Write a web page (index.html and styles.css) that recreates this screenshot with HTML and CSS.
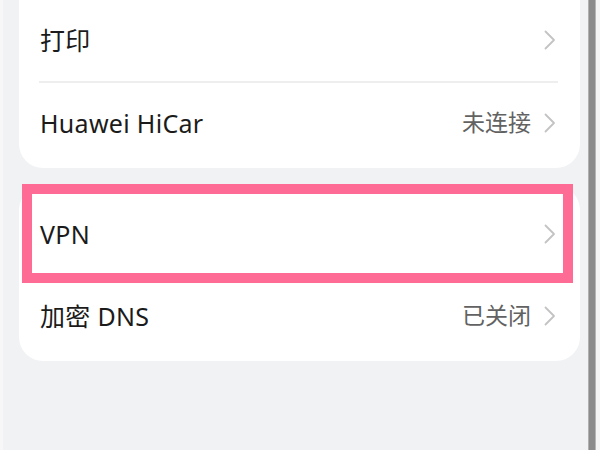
FILE: index.html
```html
<!DOCTYPE html>
<html lang="zh">
<head>
<meta charset="utf-8">
<link rel="stylesheet" href="styles.css">
</head>
<body>
<div class="frame">
  <div class="edge"></div>
  <main class="main">
    <section class="card card-top">
      <div class="row">
        <span class="label">打印</span>
        <span class="meta"><svg class="chev" viewBox="0 0 12 20"><path d="M1.5 1.5 L10 10 L1.5 18.5"/></svg></span>
      </div>
      <div class="sep"></div>
      <div class="row">
        <span class="label">Huawei HiCar</span>
        <span class="meta"><span class="value">未连接</span><svg class="chev" viewBox="0 0 12 20"><path d="M1.5 1.5 L10 10 L1.5 18.5"/></svg></span>
      </div>
    </section>
    <section class="card card-second">
      <div class="highlight"></div>
      <div class="row">
        <span class="label">VPN</span>
        <span class="meta"><svg class="chev" viewBox="0 0 12 20"><path d="M1.5 1.5 L10 10 L1.5 18.5"/></svg></span>
      </div>
      <div class="row">
        <span class="label">加密 DNS</span>
        <span class="meta"><span class="value">已关闭</span><svg class="chev" viewBox="0 0 12 20"><path d="M1.5 1.5 L10 10 L1.5 18.5"/></svg></span>
      </div>
    </section>
  </main>
  <div class="bar"></div>
  <div class="rest"></div>
</div>
</body>
</html>
```
FILE: styles.css
```css
html, body {
  margin: 0;
  padding: 0;
}
body {
  width: 600px;
  height: 450px;
  overflow: hidden;
  background: #f1f2f4;
  font-family: "Noto Sans", "Noto Sans CJK SC", sans-serif;
  color: #1b1b1b;
}
.frame {
  display: flex;
  height: 450px;
}
.edge {
  width: 3px;
  background: #f7f7f8;
}
.main {
  width: 582px;
  padding-left: 16px;
  box-sizing: border-box;
  display: flex;
  flex-direction: column;
}
.card {
  background: #fff;
  border-radius: 24px;
  width: 561px;
  box-sizing: border-box;
  position: relative;
}
.card-top {
  margin-top: -30px;
  padding-top: 30px;
  padding-bottom: 3px;
  border-top: 1px solid #f6e4e8;
}
.card-second {
  margin-top: 18px;
  padding-top: 8px;
  padding-bottom: 3px;
}
.row {
  height: 82px;
  box-sizing: border-box;
  display: flex;
  align-items: center;
  justify-content: space-between;
  padding: 0 24px 3px 21px;
  position: relative;
  z-index: 1;
}
.card-top .row:first-child {
  height: 80px;
}
.label {
  font-size: 25px;
  line-height: 1.2;
  letter-spacing: 0.3px;
}
.meta {
  display: flex;
  align-items: center;
  gap: 13px;
}
.value {
  font-size: 23px;
  line-height: 1.2;
  color: #626262;
}
.chev {
  width: 12px;
  height: 20px;
  fill: none;
  stroke: #c3c3c3;
  stroke-width: 1.8;
  stroke-linecap: round;
  stroke-linejoin: round;
}
.sep {
  height: 2px;
  background: #eeeeee;
  margin: 0 22px 0 20px;
}
.highlight {
  position: absolute;
  top: -2px;
  left: 3px;
  width: 551px;
  height: 99px;
  box-sizing: border-box;
  border: 10px solid #fe6b94;
  z-index: 2;
}
.bar {
  width: 8px;
  margin-left: 3px;
  background: #8b8b8b;
  border-left: 1px solid #b0b0b0;
  border-right: 1px solid #b5b5b5;
  box-sizing: border-box;
}
.rest {
  flex: 1;
  background: #f4f4f5;
}
```
